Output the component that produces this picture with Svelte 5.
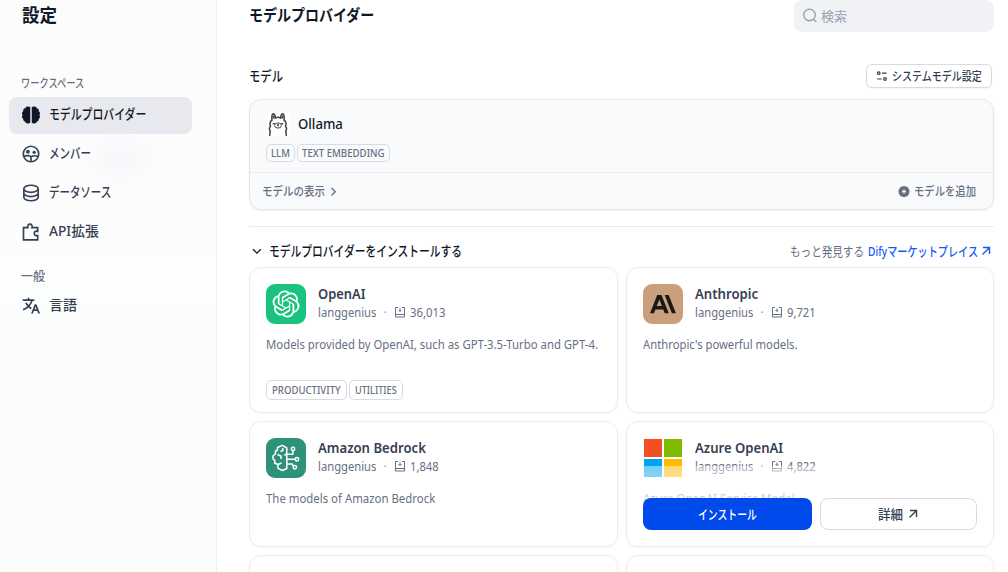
<script>
  const squeeze = (node, width) => {
    const natural = node.offsetWidth;
    if (natural) node.style.transform = `scaleX(${width / natural})`;
  };

  const workspace = [
    { icon: 'brain', label: 'モデルプロバイダー', width: 97, active: true },
    { icon: 'group', label: 'メンバー', width: 42 },
    { icon: 'database', label: 'データソース', width: 62 },
    { icon: 'puzzle', label: 'API拡張', width: 50 }
  ];
  const general = [{ icon: 'translate', label: '言語', width: 28 }];

  const plugins = [
    {
      logo: 'openai', name: 'OpenAI', nameW: 48, count: '36,013', countW: 36,
      desc: 'Models provided by OpenAI, such as GPT-3.5-Turbo and GPT-4.', descW: 332,
      tags: [['PRODUCTIVITY', 69], ['UTILITIES', 42]]
    },
    {
      logo: 'anthropic', name: 'Anthropic', nameW: 63, count: '9,721', countW: 29,
      desc: "Anthropic's powerful models.", descW: 155, tags: []
    },
    {
      logo: 'bedrock', name: 'Amazon Bedrock', nameW: 108, count: '1,848', countW: 29,
      desc: 'The models of Amazon Bedrock', descW: 169, tags: []
    },
    {
      logo: 'azure', name: 'Azure OpenAI', nameW: 88, count: '4,822', countW: 29,
      desc: 'Azure OpenAI Service Model', descW: 152, tags: [], hover: true
    }
  ];
</script>

{#snippet t(text, width)}
  <span class="fit" style:width="{width}px"><span use:squeeze={width}>{text}</span></span>
{/snippet}

{#snippet arrow(size)}
  <svg width={size} height={size} viewBox="0 0 12 12" fill="none" stroke="currentColor" stroke-width="1.4"><path d="M3 2.500h6.500v6.500M9.300 2.700 2.500 9.500" /></svg>
{/snippet}

{#snippet navIcon(name)}
  <svg class="nav-icon" width="20" height="20" viewBox="0 0 24 24" fill="none" stroke="currentColor" stroke-width="2">
    {#if name === 'brain'}
      <path fill="currentColor" stroke="none" d="M11.100 2.800v18.400c-.6.600-1.600.900-2.700.900-1.700 0-3-.7-3.300-2.100C3.300 19.700 2.300 18.200 2.700 16.600c-1.100-.8-1.500-1.700-1.500-2.600 0-.8.300-1.500.8-2-.5-.5-.8-1.200-.8-2 0-.9.400-1.800 1.500-2.600-.4-1.600.6-3.100 2.400-3.400.3-1.400 1.600-2.100 3.300-2.100 1.100 0 2.100.300 2.700.900zM12.900 2.800v18.400c.6.600 1.600.900 2.700.9 1.700 0 3-.7 3.300-2.100 1.800-.3 2.800-1.800 2.400-3.400 1.100-.8 1.500-1.700 1.500-2.600 0-.8-.3-1.500-.8-2 .5-.5.8-1.200.8-2 0-.9-.4-1.800-1.500-2.600.4-1.600-.6-3.100-2.400-3.400-.3-1.400-1.600-2.100-3.300-2.100-1.100 0-2.100.3-2.700.9z" />
    {:else if name === 'group'}
      <circle cx="12" cy="12" r="9.300" />
      <circle cx="8.300" cy="9.300" r="2.300" fill="currentColor" stroke="none" />
      <circle cx="15.800" cy="10" r="2" fill="currentColor" stroke="none" />
      <path d="M3.500 15c3-1.500 7-1.300 8.500.500v6M12 15.500c2-1.500 6-1.700 8.500-.300" />
    {:else if name === 'database'}
      <ellipse cx="12" cy="7" rx="8.600" ry="4.300" />
      <path d="M3.400 7v10c0 2.400 3.800 4.300 8.600 4.300s8.600-1.900 8.600-4.300V7M3.400 12c0 2.400 3.800 4.300 8.600 4.300s8.600-1.900 8.600-4.300" />
    {:else if name === 'puzzle'}
      <path d="M3 6.800h5.200C7.500 4.400 8.700 2.600 10.700 2.600s3.200 1.800 2.500 4.200H20v4.400c-2.600-.7-4.100.5-4.100 2.500s1.500 3.200 4.100 2.500v5.200H3z" />
    {:else}
      <path fill="currentColor" stroke="none" d="M18.5 10L22.9 21H20.745L19.544 18H15.454L14.255 21H12.101L16.5 10H18.5ZM10 2V4H16V6L14.0322 6.0006C13.2425 8.36616 11.9988 10.5057 10.4115 12.301C11.1344 12.9457 11.917 13.5176 12.7475 14.0079L11.9969 15.8855C10.9237 15.2781 9.91944 14.5524 8.99961 13.7249C7.21403 15.332 5.10914 16.5553 2.79891 17.2734L2.26257 15.3442C4.2385 14.7203 6.04543 13.6737 7.59042 12.3021C6.46277 11.0281 5.50873 9.57985 4.76742 8.00028L7.00684 8.00037C7.57018 9.03885 8.23979 10.0033 8.99967 10.877C10.2283 9.46508 11.2205 7.81616 11.9095 6.00101L2 6V4H8V2H10ZM17.5 12.8852L16.253 16H18.745L17.5 12.8852Z" />
    {/if}
  </svg>
{/snippet}

{#snippet logo(name)}
  <svg class="logo" class:square={name === 'azure'} width="40" height="40" viewBox="0 0 40 40" fill="none">
    {#if name === 'openai'}
      <rect width="40" height="40" fill="#19c37d" />
      <path transform="translate(6.500 6.500) scale(1.125)" fill="#fff" d="M22.2819 9.8211a5.9847 5.9847 0 0 0-.5157-4.9108 6.0462 6.0462 0 0 0-6.5098-2.9A6.0651 6.0651 0 0 0 4.9807 4.1818a5.9847 5.9847 0 0 0-3.9977 2.9 6.0462 6.0462 0 0 0 .7427 7.0966 5.98 5.98 0 0 0 .511 4.9107 6.051 6.051 0 0 0 6.5146 2.9001A5.9847 5.9847 0 0 0 13.2599 24a6.0557 6.0557 0 0 0 5.7718-4.2058 5.9894 5.9894 0 0 0 3.9977-2.9001 6.0557 6.0557 0 0 0-.7475-7.0729zm-9.022 12.6081a4.4755 4.4755 0 0 1-2.8764-1.0408l.1419-.0804 4.7783-2.7582a.7948.7948 0 0 0 .3927-.6813v-6.7369l2.02 1.1686a.071.071 0 0 1 .038.052v5.5826a4.504 4.504 0 0 1-4.4945 4.4944zm-9.6607-4.1254a4.4708 4.4708 0 0 1-.5346-3.0137l.142.0852 4.783 2.7582a.7712.7712 0 0 0 .7806 0l5.8428-3.3685v2.3324a.0804.0804 0 0 1-.0332.0615L9.74 19.9502a4.4992 4.4992 0 0 1-6.1408-1.6464zM2.3408 7.8956a4.485 4.485 0 0 1 2.3655-1.9728V11.6a.7664.7664 0 0 0 .3879.6765l5.8144 3.3543-2.0201 1.1685a.0757.0757 0 0 1-.071 0l-4.8303-2.7865A4.504 4.504 0 0 1 2.3408 7.872zm16.5963 3.8558L13.1038 8.364 15.1192 7.2a.0757.0757 0 0 1 .071 0l4.8303 2.7913a4.4944 4.4944 0 0 1-.6765 8.1042v-5.6772a.79.79 0 0 0-.407-.667zm2.0107-3.0231l-.142-.0852-4.7735-2.7818a.7759.7759 0 0 0-.7854 0L9.409 9.2297V6.8974a.0662.0662 0 0 1 .0284-.0615l4.8303-2.7866a4.4992 4.4992 0 0 1 6.6802 4.66zM8.3065 12.863l-2.02-1.1638a.0804.0804 0 0 1-.038-.0567V6.0742a4.4992 4.4992 0 0 1 7.3757-3.4537l-.142.0805L8.704 5.459a.7948.7948 0 0 0-.3927.6813zm1.0976-2.3654l2.602-1.4998 2.6069 1.4998v2.9994l-2.5974 1.4997-2.6067-1.4997Z" />
    {:else if name === 'anthropic'}
      <rect width="40" height="40" fill="#ca9f7b" />
      <path fill="#191918" fill-rule="evenodd" d="M14.200 11h4.300l7.300 18.300h-4.100l-1.500-3.900h-7.700L11 29.300H7zM13.800 22h5.100l-2.550-6.600zM21.700 11h4l7.200 18.300h-4z" />
    {:else if name === 'bedrock'}
      <rect width="40" height="40" fill="#2e927b" />
      <g stroke="#fff" stroke-width="1.500" stroke-linejoin="round">
        <path d="M20.800 10v20.500l-4.300 2-4.500-2.200v-3.800l-3.200-1.300v-2.800L7 21v-3l2.500-2.300v-2.500l2-1.200V9.500l4.800-2.100z" />
        <path d="M16.800 10v2.500l-2.300 1M11.500 16.500l3.500 1.500v3M20.800 15.500l-2.500 2M12 26.500l3.500-1.500" />
        <path d="M20.800 16.200h6.100v-3.500M20.800 21.200h8.500M20.800 26h5.200l1.500 2" />
        <circle cx="27" cy="10.900" r="1.700" /><circle cx="31" cy="21.200" r="1.700" /><circle cx="28.800" cy="29.200" r="1.700" />
      </g>
    {:else}
      <path fill="#f25022" d="M1 1h18v18H1z" /><path fill="#7fba00" d="M21 1h18v18H21z" />
      <path fill="#00a4ef" d="M1 21h18v18H1z" /><path fill="#ffb900" d="M21 21h18v18H21z" />
    {/if}
  </svg>
{/snippet}

<div class="page">
  <aside>
    <h1>{@render t('設定', 35)}</h1>
    <p class="group-label">{@render t('ワークスペース', 63)}</p>
    <nav>
      {#each workspace as item}
        <div class="nav-item" class:active={item.active}>
          {@render navIcon(item.icon)}{@render t(item.label, item.width)}
        </div>
      {/each}
    </nav>
    <p class="group-label second">{@render t('一般', 24)}</p>
    <nav>
      {#each general as item}
        <div class="nav-item">{@render navIcon(item.icon)}{@render t(item.label, item.width)}</div>
      {/each}
    </nav>
  </aside>

  <main>
    <header>
      <h2>{@render t('モデルプロバイダー', 125)}</h2>
      <div class="search">
        <svg width="16" height="16" viewBox="0 0 16 16" fill="none" stroke="#98a2b2" stroke-width="1.400"><circle cx="7.500" cy="7" r="5.800" /><path d="m11.600 11.200 2.700 2.700" /></svg>
        {@render t('検索', 26)}
      </div>
    </header>

    <div class="models-head">
      <h3>{@render t('モデル', 34)}</h3>
      <button class="system">
        <svg width="12" height="12" viewBox="0 0 12 12" fill="none" stroke="currentColor" stroke-width="1.200"><circle cx="2.700" cy="3.200" r="1.300" /><path d="M6 3.200h4.500M1.200 9h4.500" /><circle cx="9" cy="9" r="1.300" /></svg>
        {@render t('システムモデル設定', 90)}
      </button>
    </div>

    <section class="provider">
      <div class="provider-top">
        <div class="provider-name">
          <svg width="24" height="24" viewBox="0 0 24 24" fill="none" stroke="#444" stroke-width="1.500">
            <rect width="24" height="24" rx="3" fill="#fff" stroke="none" />
            <path d="M4 24c-.7-2 0-3.300.3-4.500-1.300-2-.9-3.800.2-5.200-1-2.900-.3-5.200 1.500-6C5.600 5 5.900 2 7.300 1.800c1.500-.1 2 2.500 2.100 4.200 1.600-1 3.600-1 5.200 0 .1-1.700.6-4.300 2.100-4.200 1.400.2 1.700 3.200 1.300 6.500 1.800.8 2.500 3.100 1.500 6 1.100 1.400 1.500 3.200.2 5.200.3 1.200 1 2.500.3 4.500" />
            <path stroke-width="2" d="M7.500 3.500v3M16.500 3.500v3" /><ellipse cx="12" cy="13.500" rx="3.400" ry="2.600" stroke-width="1" />
            <path d="M11 13h2M12 13v1.300M6.800 11.700h2M15.200 11.700h2" />
          </svg>
          {@render t('Ollama', 45)}
        </div>
        <div class="tags"><span class="tag">{@render t('LLM', 19)}</span><span class="tag">{@render t('TEXT EMBEDDING', 83)}</span></div>
      </div>
      <div class="provider-foot">
        <span class="show">{@render t('モデルの表示', 63)}<svg width="12" height="12" viewBox="0 0 12 12" fill="none" stroke="currentColor" stroke-width="1.400"><path d="m3.500 2 3.700 3.700L3.500 9.400" /></svg></span>
        <span class="add"><svg width="12" height="12" viewBox="0 0 12 12"><circle cx="6" cy="5.500" r="5.500" fill="currentColor" /><path d="M6 3.700v3.600M4.200 5.500h3.600" stroke="#fff" stroke-width="1.300" /></svg>{@render t('モデルを追加', 62)}</span>
      </div>
    </section>

    <div class="install-head">
      <div class="install-title">
        <svg width="16" height="16" viewBox="0 0 16 16" fill="none" stroke="currentColor" stroke-width="1.300"><path d="m4 6.200 3.900 3.900 3.900-3.900" /></svg>
        {@render t('モデルプロバイダーをインストールする', 193)}
      </div>
      <div class="discover">{@render t('もっと発見する', 74)}<a>{@render t('Difyマーケットプレイス', 110)}{@render arrow(12)}</a></div>
    </div>

    <div class="grid">
      {#each plugins as p}
        <article class="card">
          <div class="card-head">
            {@render logo(p.logo)}
            <div class="info">
              <div class="name">{@render t(p.name, p.nameW)}</div>
              <div class="meta">
                {@render t('langgenius', 58)}<i>·</i>
                <svg width="12" height="12" viewBox="0 0 12 12" fill="none" stroke="currentColor"><path d="M4 .500H1.500v9.500h9V.500H8M1.500 7.500h9M6 1.500v3M4.500 3 6 4.500 7.500 3" /></svg>
                {@render t(p.count, p.countW)}
              </div>
            </div>
          </div>
          <p class="desc">{@render t(p.desc, p.descW)}</p>
          {#if p.tags.length}
            <div class="tags">{#each p.tags as [label, width]}<span class="tag">{@render t(label, width)}</span>{/each}</div>
          {/if}
          {#if p.hover}
            <div class="actions">
              <button class="primary">{@render t('インストール', 59)}</button>
              <button class="detail">{@render t('詳細', 25)}{@render arrow(12)}</button>
            </div>
          {/if}
        </article>
      {/each}
      <article class="card"></article>
      <article class="card"></article>
    </div>
  </main>
</div>

<style>
  :global(body) { background: #fff; overflow: hidden; }
  .page, .page * { box-sizing: border-box; }
  .page {
    display: flex; width: 1008px; height: 572px; overflow: hidden;
    font-family: "Noto Sans", "Noto Sans CJK JP", sans-serif; font-size: 13px; color: #676f83;
  }
  h1, h2, h3, p { margin: 0; }
  svg { display: block; flex: none; }
  button { font: inherit; padding: 0; display: flex; align-items: center; justify-content: center; }
  .fit { display: inline-block; white-space: nowrap; flex: none; }
  .fit > span { display: inline-block; transform-origin: 0 50%; }

  aside {
    width: 217px; height: 572px; flex: none; border-right: 1px solid #f0f1f3; padding: 0 24px 0 9px;
    background:
      radial-gradient(ellipse 46px 30px at 121px 160px, #f7f7fb 0, rgba(250, 250, 253, 0) 100%),
      linear-gradient(#fbfdfd 0, #fcfcfd 60px, #fdfdfe 250px, #fbfdfc 360px, #fbfdfc);
  }
  h1 { padding-left: 13px; height: 30px; line-height: 30px; font-size: 18px; font-weight: 600; color: #101828; }
  .group-label { margin-top: 45px; padding-left: 12px; height: 18px; line-height: 18px; font-size: 12px; font-weight: 500; }
  .group-label.second { margin-top: 17px; }
  nav { display: grid; gap: 2px; margin-top: 4px; }
  .nav-item { display: flex; align-items: center; gap: 8px; height: 37px; padding: 0 0 2px 12px; border-radius: 8px; font-size: 14px; line-height: 20px; font-weight: 500; color: #354052; }
  .nav-item .fit { height: 21px; line-height: 19px; }
  .nav-item.active { background: #e8e9ee; color: #101828; }
  .second + nav { margin-top: 2px; }

  main { flex: 1; padding: 0 14px 0 32px; }
  header { display: flex; justify-content: space-between; height: 32px; }
  h2 { height: 30px; line-height: 30px; font-size: 16px; font-weight: 600; color: #101828; }
  .search { display: flex; align-items: center; gap: 3px; width: 200px; height: 32px; padding: 0 0 0 8px; border-radius: 8px; background: #f1f2f6; color: #98a2b2; line-height: 18px; }
  .models-head { display: flex; align-items: center; justify-content: space-between; margin-top: 32px; height: 24px; padding-right: 2px; }
  h3 { line-height: 24px; font-size: 14px; font-weight: 500; color: #101828; }
  .system { gap: 4px; width: 126px; height: 24px; border: 1px solid #d9dbe1; border-radius: 6px; background: #fff; box-shadow: 0 1px 2px #1018280d; color: #354052; font-size: 12px; line-height: 18px; font-weight: 500; }
  .system .fit { margin-top: 1px; }
  .provider { margin-top: 11px; height: 111px; border: 1px solid #e4e7ea; border-radius: 12px; background: #f9fafb; box-shadow: 0 1px 2px #10182812; }
  .provider-top { height: 72px; padding: 12px 16px 0; }
  .provider-name { display: flex; align-items: center; gap: 8px; height: 24px; color: #101828; font-size: 14px; line-height: 20px; font-weight: 500; }
  .tags { display: flex; gap: 2px; }
  .provider .tags { margin-top: 8px; }
  .tag { height: 18px; padding: 0 5px; border: 1px solid #d9dbe1; border-radius: 5px; font-size: 10px; line-height: 16px; font-weight: 500; }
  .provider .tag { padding: 0 4px; }
  .provider-foot { display: flex; align-items: center; justify-content: space-between; height: 38px; padding: 0 17px 0 12px; border-top: 1px solid #eceef0; font-size: 12px; line-height: 18px; font-weight: 500; }
  .show, .add { display: flex; align-items: center; gap: 3px; }
  .add { gap: 4px; }
  .install-head { display: flex; align-items: center; justify-content: space-between; margin-top: 16px; height: 41px; padding: 7px 2px 0 0; border-top: 1px solid #e9ebee; }
  .install-title { display: flex; align-items: center; gap: 4px; color: #101828; font-size: 14px; line-height: 20px; font-weight: 500; }
  .discover, a { display: flex; align-items: center; gap: 4px; line-height: 20px; }
  a { gap: 2px; color: #155aef; font-weight: 500; }

  .grid { display: grid; grid-template-columns: 369px 368px; grid-template-rows: 146px 126px 126px; gap: 8px; }
  .card { position: relative; padding: 16px; border: 1px solid #ebecef; border-radius: 12px; background: #fff; box-shadow: 0 1px 2px #1018280a; overflow: hidden; }
  .card-head { display: flex; gap: 12px; height: 40px; }
  .logo { border-radius: 9px; }
  .logo.square { border-radius: 3px; }
  .name { height: 20px; line-height: 20px; font-size: 14px; font-weight: 600; color: #354052; }
  .meta { display: flex; align-items: center; height: 18px; font-size: 12px; line-height: 18px; }
  .meta i { width: 18px; text-align: center; font-style: normal; color: #98a2b2; }
  .meta svg { margin-right: 4px; }
  .desc { margin-top: 12px; height: 18px; font-size: 12px; line-height: 18px; }
  .card > .tags { margin-top: 26px; }
  .card .tag { height: 20px; line-height: 18px; }
  .actions { position: absolute; left: 0; right: 0; bottom: 0; display: flex; gap: 8px; padding: 32px 16px 16px; height: 80px; background: linear-gradient(to top, #fff, rgba(255, 255, 255, .45)); }
  .actions button { height: 32px; border-radius: 8px; line-height: 20px; font-weight: 500; }
  .primary { width: 169px; border: 0; background: #004aeb; color: #fff; }
  .detail { width: 157px; gap: 4px; border: 1px solid #d9dbe1; background: #fff; color: #354052; }
</style>
